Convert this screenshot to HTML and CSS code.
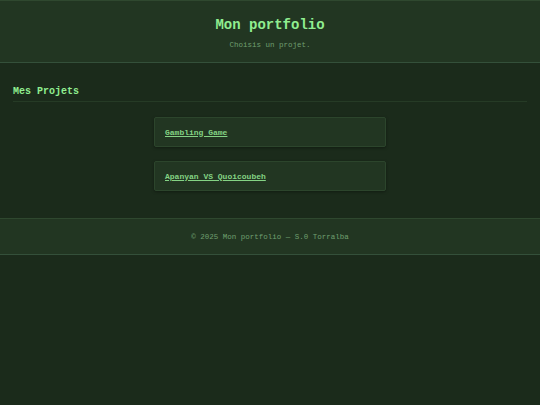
FILE: index.html
```html
<!DOCTYPE html>
<html lang="fr">
<head>
<meta charset="utf-8">
<title>Mon portfolio</title>
<link rel="stylesheet" href="styles.css">
</head>
<body>
<header class="site-header">
  <h1 class="site-title">Mon portfolio</h1>
  <p class="site-sub">Choisis un projet.</p>
</header>
<main class="content">
  <h2 class="section-title">Mes Projets</h2>
  <div class="cards">
    <div class="card"><a class="card-link" href="#">Gambling Game</a></div>
    <div class="card"><a class="card-link" href="#">Apanyan VS Quoicoubeh</a></div>
  </div>
</main>
<footer class="site-footer">
  <p class="footer-text">© 2025 Mon portfolio — S.0 Torralba</p>
</footer>
</body>
</html>
```

FILE: styles.css
```css
* { box-sizing: border-box; }
html, body {
  margin: 0;
  padding: 0;
  background: #1b2b1b;
  font-family: "Liberation Mono", "Courier New", monospace;
  color: #90ee90;
}
.site-header {
  background: #223622;
  border-top: 1px solid #2f482f;
  border-bottom: 1px solid #34503a;
  padding: 14px 0 12px;
  text-align: center;
}
.site-title {
  margin: 0 0 5px;
  font-size: 14px;
  line-height: 20px;
  font-weight: bold;
  color: #90ee90;
}
.site-sub {
  margin: 0;
  font-size: 7.5px;
  line-height: 10px;
  color: #6f9f6f;
}
.content {
  padding: 22px 13px 27px;
}
.section-title {
  margin: 0;
  font-size: 10px;
  line-height: 14px;
  padding-bottom: 2px;
  font-weight: bold;
  color: #90ee90;
  border-bottom: 1px solid #263b26;
}
.cards {
  display: flex;
  flex-direction: column;
  align-items: center;
  gap: 14px;
  margin-top: 15px;
}
.card {
  width: 232px;
  height: 30px;
  background: #223622;
  border: 1px solid #2c452c;
  border-radius: 2px;
  box-shadow: 0 1px 3px rgba(0,0,0,0.35);
  display: flex;
  align-items: center;
  padding: 0 10px;
}
.card-link {
  font-size: 8px;
  font-weight: bold;
  color: #84d384;
  text-decoration: underline;
}
.site-footer {
  background: #223622;
  border-top: 1px solid #2f482f;
  border-bottom: 1px solid #34503a;
  height: 37px;
  display: flex;
  align-items: center;
  justify-content: center;
}
.footer-text {
  margin: 0;
  font-size: 7.5px;
  color: #6f9f6f;
}
```
